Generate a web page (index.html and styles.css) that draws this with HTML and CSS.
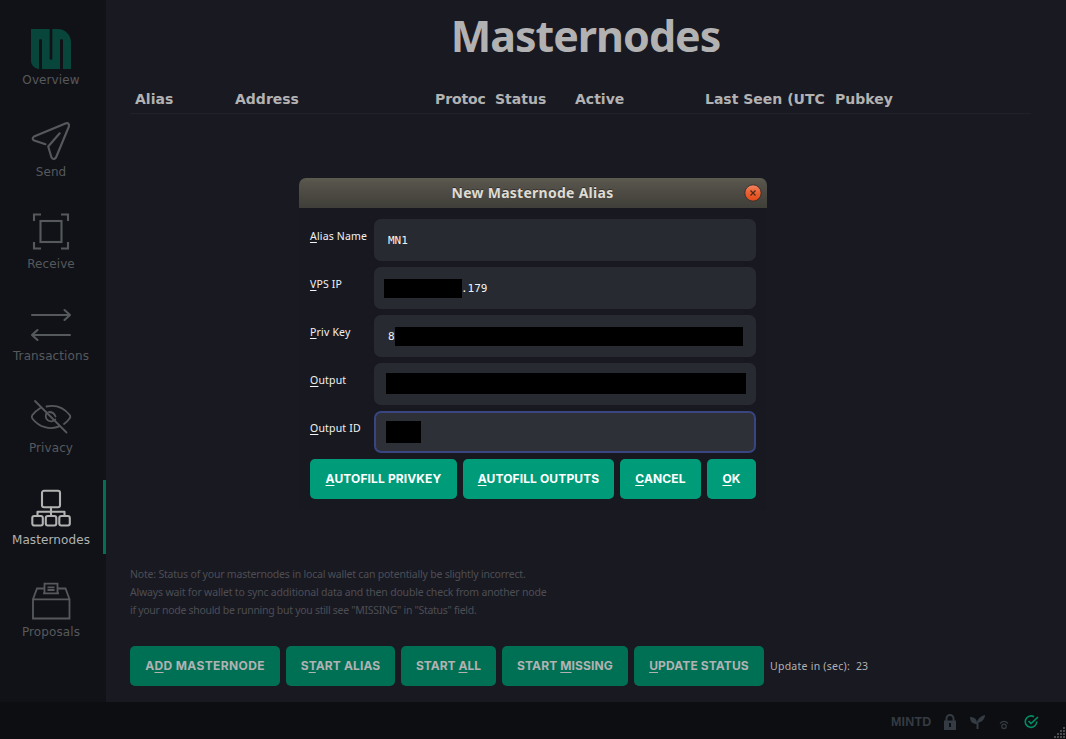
FILE: index.html
```html
<!DOCTYPE html>
<html lang="en">
<head>
<meta charset="utf-8">
<title>Masternodes</title>
<link rel="stylesheet" href="styles.css">
</head>
<body>
<div class="app">
  <div class="body">
    <nav class="sidebar">
      <a class="nav-item"><svg class="nav-icon" viewBox="0 0 44 44"><path class="logo-fill" d="M2 2H29C36 2 42 8 42 15V42H34V13.500a1.500 1.500 0 0 0-3 0V42H13V13.500a1.500 1.500 0 0 0-3 0V42C6 42 2 38 2 34Z"/><path class="logo-slot" d="M22 1V31.500"/></svg><span>Overview</span></a>
      <a class="nav-item"><svg class="nav-icon" viewBox="0 0 44 44"><path d="M16.500 25.200L5.200 21.500Q2.200 19.800 5 17.500L37 4.200Q40.500 3.600 39.900 7.500L27 38.500Q24.500 41.500 22.500 38.500L19.200 27.500L30.700 14.300"/></svg><span>Send</span></a>
      <a class="nav-item"><svg class="nav-icon square" viewBox="0 0 44 44"><path d="M5 10V3.500H12M32 3.500H39V10M39 31V37.500H32M12 37.500H5V31"/><rect x="11.500" y="10" width="21" height="21"/></svg><span>Receive</span></a>
      <a class="nav-item"><svg class="nav-icon" viewBox="0 0 44 44"><path d="M3 12H41M35.500 7L41 12L35.500 17M41 32H3M8.500 27L3 32L8.500 37"/></svg><span>Transactions</span></a>
      <a class="nav-item"><svg class="nav-icon thin" viewBox="0 0 44 44"><path d="M6 6L37.500 37.500M17.500 11.500C27 9.500 35 13 40.700 20Q42 22 40.500 23.500Q38 27 35 29M11 13.300Q6.500 16 3.200 20.300Q2.200 22 3.500 23.700C10 32 21 35.500 31 31.200M18 17.500A5.300 5.300 0 1 0 26.300 24.500M20 17Q25 17 26.500 21.500"/></svg><span>Privacy</span></a>
      <a class="nav-item active"><svg class="nav-icon" viewBox="0 0 44 44"><rect x="13" y="3.800" width="18" height="16.500" rx="2"/><rect x="3.300" y="29" width="10.500" height="9.500" rx="2"/><rect x="16.800" y="29" width="10.500" height="9.500" rx="2"/><rect x="30.300" y="29" width="10.500" height="9.500" rx="2"/><path d="M22 20.500V29M8.500 29V24.700H35.500V29"/></svg><span>Masternodes</span></a>
      <a class="nav-item"><svg class="nav-icon square thin" viewBox="0 0 44 44"><path d="M4 20.300H40.500V39.500H4ZM4 20.300L8 9.500H15.500M28.500 9.500H36.500L40.500 20.300M15.500 14.300V4.700H28.500V14.300M14 14.300H30M18.500 8.300H25.500M18.500 11H25.500"/></svg><span>Proposals</span></a>
    </nav>
    <main class="page">
      <h1 class="title">Masternodes</h1>
      <div class="table-head">
        <span class="col w100">Alias</span><span class="col w200">Address</span><span class="col w60">Protoc</span><span class="col w80">Status</span><span class="col w130">Active</span><span class="col w130">Last Seen (UTC</span><span class="col">Pubkey</span>
      </div>
      <div class="table-body"></div>
      <div class="note">
        <p class="n1">Note: Status of your masternodes in local wallet can potentially be slightly incorrect.</p>
        <p class="n2">Always wait for wallet to sync additional data and then double check from another node</p>
        <p class="n3">if your node should be running but you still see "MISSING" in "Status" field.</p>
      </div>
      <div class="actions">
        <button class="btn b150">A<u>D</u>D MASTERNODE</button>
        <button class="btn b109">S<u>T</u>ART ALIAS</button>
        <button class="btn b95">START <u>A</u>LL</button>
        <button class="btn b126">START <u>M</u>ISSING</button>
        <button class="btn b130"><u>U</u>PDATE STATUS</button>
        <span class="timer">Update in (sec):</span><span class="timer seconds">23</span>
      </div>
    </main>
  </div>
  <footer class="status">
    <span class="unit">MINTD</span>
    <svg class="s-lock" viewBox="0 0 12 16"><path d="M2.500 8V4.500a3.500 3.500 0 0 1 7 0V8" fill="none" stroke="#343b42" stroke-width="2"/><path d="M0 6.500H12V16H0Z" fill="#343b42"/><path d="M6 9V13" stroke="#0d0e11" stroke-width="2"/></svg>
    <svg class="s-leaf" viewBox="0 0 15 14"><path d="M0 2C4 2 7 4 7 8C7 5 10 1 15 0C15 4 12 7 8.500 7.500V14H6.500V9C3 9 0 7 0 2Z" fill="#343b42"/></svg>
    <svg class="s-net" viewBox="0 0 10 10"><path d="M1 3.500Q5-.6 9 3.500" fill="none" stroke="#343b42" stroke-width="1.300"/><circle cx="5" cy="6.300" r="2.200" fill="none" stroke="#343b42" stroke-width="1.300"/></svg>
    <svg class="s-check" viewBox="0 0 16 14"><path d="M10 1.800A5.700 5.700 0 1 0 12.700 6.500" fill="none" stroke="#008c65" stroke-width="1.600"/><path d="M4.500 6L7 8.500L14 2" fill="none" stroke="#008c65" stroke-width="1.700"/></svg>
    <svg class="grip" viewBox="0 0 12 12"><path d="M9 1h2M6 4h2M9 4h2M3 7h2M6 7h2M9 7h2M0 10h2M3 10h2M6 10h2M9 10h2" stroke="#4b4b4b" stroke-width="2"/></svg>
  </footer>
  <section class="dialog">
    <header class="dialog-bar"><span class="dialog-title">New Masternode Alias</span>
      <svg class="close" viewBox="0 0 18 18"><defs><linearGradient id="g" x2="0" y2="1"><stop stop-color="#f3845f"/><stop offset=".5" stop-color="#eb5f31"/><stop offset="1" stop-color="#e14a17"/></linearGradient></defs><circle cx="9" cy="9" r="8.200" fill="url(#g)" stroke="#353330"/><path d="M6.500 6.500l5 5M11.500 6.500l-5 5" stroke="#4b2a17" stroke-width="1.300"/></svg>
    </header>
    <div class="form">
      <label><u>A</u>lias Name</label><div class="field">MN1</div>
      <label><u>V</u>PS IP</label><div class="field from10"><i class="mask ip"></i>.179</div>
      <label><u>P</u>riv Key</label><div class="field">8<i class="mask key"></i></div>
      <label><u>O</u>utput</label><div class="field from12"><i class="mask out"></i></div>
      <label><u>O</u>utput ID</label><div class="field focus"><i class="mask oid"></i></div>
    </div>
    <div class="dialog-actions">
      <button class="btn b147"><u>A</u>UTOFILL PRIVKEY</button>
      <button class="btn b151"><u>A</u>UTOFILL OUTPUTS</button>
      <button class="btn b81"><u>C</u>ANCEL</button>
      <button class="btn b49"><u>O</u>K</button>
    </div>
  </section>
</div>
</body>
</html>
```
FILE: styles.css
```css
* { box-sizing: border-box; }
body { margin: 0; background: #191922; font-family: "Noto Sans", sans-serif; overflow: hidden; }
.app { position: relative; width: 1066px; height: 739px; display: flex; flex-direction: column; }
.body { display: flex; height: 702px; }
.sidebar { width: 106px; background: #111217; padding-top: 20px; display: flex; flex-direction: column; gap: 18px; }
.nav-item { height: 74px; padding: 7px 4px 0 0; display: flex; flex-direction: column; align-items: center; color: #56595c; font: 12px/18px "DejaVu Sans", sans-serif; letter-spacing: .1px; }
.nav-item.active { color: #b2b2b2; padding-right: 1px; border-right: 3px solid #007155; }
.nav-icon { width: 44px; height: 44px; fill: none; stroke: currentColor; stroke-width: 2.1; stroke-linecap: round; stroke-linejoin: round; flex: none; }
.nav-icon.square { stroke-linecap: butt; stroke-linejoin: miter; }
.nav-icon.thin { stroke-width: 1.8; }
.logo-fill { fill: #08453a; stroke: none; }
.logo-slot { stroke: #111217; stroke-width: 2.6; }
.page { width: 960px; padding: 0 35px 0 24px; display: flex; flex-direction: column; }
.title { margin: 0; height: 84px; padding: 3px 0 0 10px; text-align: center; font-size: 43px; line-height: 66px; font-weight: 700; letter-spacing: -1px; color: #b2b2b2; }
.table-head { display: flex; height: 30px; padding-left: 5px; border-bottom: 1px solid #20212a; color: #b2b2b2; font: bold 14px/30px "DejaVu Sans", sans-serif; }
.col { white-space: nowrap; }
.w60 { width: 60px; letter-spacing: -.1px; } .w80 { width: 80px; } .w100 { width: 100px; } .w130 { width: 130px; } .w200 { width: 200px; }
.table-body { height: 451px; }
.note { height: 81px; color: #4d4e53; font-size: 10.5px; line-height: 18px; white-space: nowrap; }
.note p { margin: 0; }
.n1 { letter-spacing: -.2px; } .n2 { letter-spacing: -.185px; } .n3 { letter-spacing: -.29px; }
.actions { display: flex; gap: 6px; align-items: center; }
.btn { height: 40px; padding: 0; border: 0; border-radius: 5px; background: #007055; color: #b2b2b2; font: 700 12px/40px Inter, sans-serif; letter-spacing: .12px; text-align: center; white-space: nowrap; }
u { text-decoration: underline; text-decoration-thickness: 1px; text-underline-offset: 2px; text-decoration-skip-ink: none; }
.b150 { width: 150px; letter-spacing: .37px; } .b109 { width: 109px; } .b95 { width: 95px; letter-spacing: 0; } .b126 { width: 126px; } .b130 { width: 130px; }
.b147 { width: 147px; } .b151 { width: 151px; } .b81 { width: 81px; } .b49 { width: 49px; }
.timer { color: #b2b2b2; font-size: 10.5px; letter-spacing: .25px; }
.seconds { letter-spacing: 0; }
.status { height: 37px; background: #0d0e11; display: flex; align-items: center; padding: 2px 0 0 891px; }
.unit { width: 53px; color: #343b42; font: bold 12.5px "Liberation Sans", sans-serif; letter-spacing: .2px; }
.s-lock { width: 12px; height: 16px; margin-right: 14px; }
.s-leaf { width: 15px; height: 14px; margin-right: 14px; }
.s-net { width: 10px; height: 10px; margin: 6px 15px 0 0; }
.s-check { width: 16px; height: 14px; }
.grip { width: 12px; height: 12px; margin-left: 14px; align-self: flex-end; }
.dialog { position: absolute; left: 299px; top: 178px; width: 468px; height: 332px; background: #181920; border-radius: 7px 7px 0 0; }
.dialog-bar { height: 30px; display: flex; align-items: center; padding-right: 5px; border-radius: 7px 7px 0 0; background: linear-gradient(#5d5a50, #56534b 15%, #3f3e38); }
.dialog-title { flex: 1; padding: 0 0 2px 22px; text-align: center; color: #dfdbd2; font-weight: 700; font-size: 14px; letter-spacing: .27px; text-shadow: 0 -1px #33322e; }
.close { width: 18px; height: 18px; }
.form { display: grid; grid-template-columns: 64px 382px; row-gap: 6px; padding: 11px 11px 6px; }
.form label { color: #f2f2f2; font-size: 10.5px; line-height: 34px; letter-spacing: .18px; white-space: nowrap; }
.field { height: 42px; display: flex; align-items: center; padding-left: 14px; border-radius: 7px; background: #282a32; color: #f2f2f2; font: 11px "DejaVu Sans Mono", monospace; }
.from10 { padding-left: 10px; } .from12 { padding-left: 12px; }
.focus { padding-left: 10px; border: 2px solid #38457f; background: #2e3037; }
.mask { background: #000; height: 19px; }
.ip { width: 78px; margin-right: -1px; } .key { width: 348px; } .out { width: 360px; height: 21px; margin-bottom: 1px; } .oid { width: 35px; height: 22px; }
.dialog-actions { display: flex; gap: 6px; padding-left: 11px; }
.dialog-actions .btn { background: #009c7a; color: #fff; }
```
